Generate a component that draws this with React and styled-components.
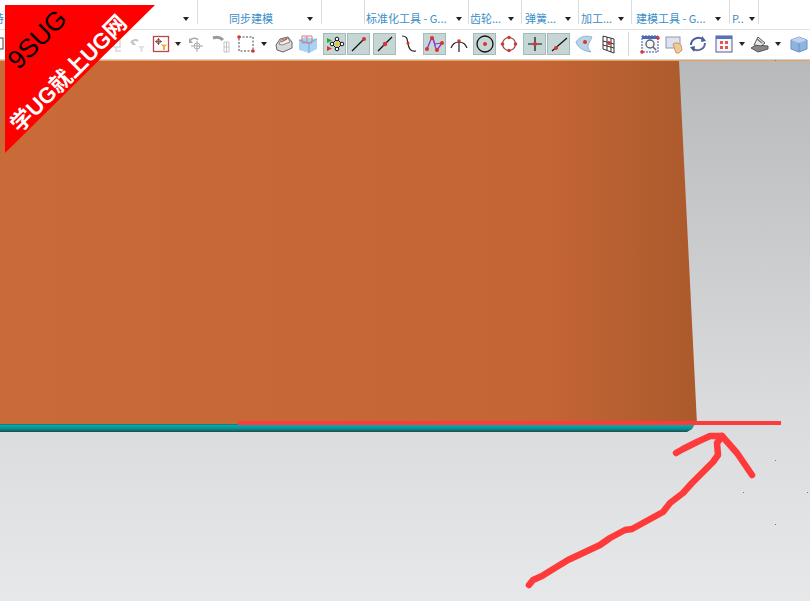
import React from 'react'
import styled, { createGlobalStyle } from 'styled-components'

const Global = createGlobalStyle`
    html, body {
        margin: 0;
        padding: 0;
        background: #fff;
        font-family: "Noto Sans CJK SC", "Liberation Sans", sans-serif;
    }
`

const Page = styled.div`
    position: relative;
    width: 810px;
    height: 601px;
    overflow: hidden;
    display: flex;
    flex-direction: column;
    background: #fff;
`

const Ribbon = styled.div`
    height: 30px;
    flex: none;
    box-sizing: border-box;
    display: flex;
    align-items: flex-start;
    background: #fff;
    border-bottom: 1px solid #e2e2e2;
`

const Group = styled.div`
    width: ${p => p.$w}px;
    height: 24px;
    flex: none;
    box-sizing: border-box;
    border-right: 1px solid #dcdcdc;
    display: flex;
    align-items: center;
    padding-top: 13px;
    padding-left: ${p => p.$pl || 0}px;
`

const Label = styled.span`
    font-size: 11px;
    line-height: 11px;
    color: #3b8ec7;
    white-space: nowrap;
    margin-left: ${p => p.$ml || 0}px;
`

const Caret = styled.i`
    display: block;
    flex: none;
    width: 0;
    height: 0;
    border-left: 3px solid transparent;
    border-right: 3px solid transparent;
    border-top: 4px solid #222;
    margin-left: ${p => p.$ml || 0}px;
    margin-right: ${p => p.$mr || 0}px;
`

const Toolbar = styled.div`
    height: 30px;
    flex: none;
    box-sizing: border-box;
    display: flex;
    align-items: center;
    padding-bottom: 2px;
    background: #fff;
    border-bottom: 1px solid #d4d4d4;
`

const Tool = styled.div`
    width: ${p => p.$w || 23}px;
    height: 22px;
    flex: none;
    box-sizing: border-box;
    margin-left: ${p => p.$ml || 0}px;
    display: flex;
    align-items: center;
    justify-content: center;
    background: ${p => (p.$on ? '#c6d6d4' : 'transparent')};
    border: ${p => (p.$on ? '1px solid #a3bcb9' : 'none')};
`

const Divider = styled.div`
    width: 1px;
    height: 24px;
    flex: none;
    background: #d8d8d8;
    margin-left: ${p => p.$ml || 0}px;
`

const Viewport = styled.div`
    flex: 1;
    position: relative;
    background: linear-gradient(#b8b9bb 0%, #d9dadc 62%, #e7e8ea 100%);
`

const Scene = styled.svg`
    display: block;
    width: 100%;
    height: 100%;
`

const Badge = styled.div`
    position: absolute;
    left: 5px;
    top: 5px;
    width: 150px;
    height: 148px;
    background: #fe0000;
    clip-path: polygon(0 0, 100% 0, 0 100%);
`

const BadgeTop = styled.span`
    position: absolute;
    left: -18px;
    top: 19px;
    width: 100px;
    text-align: center;
    font-family: "Liberation Sans", sans-serif;
    font-size: 26px;
    line-height: 30px;
    color: #000;
    transform: rotate(-45deg);
`

const BadgeBottom = styled.span`
    position: absolute;
    left: -21px;
    top: 54px;
    width: 170px;
    text-align: center;
    font-family: "Liberation Sans", "Noto Sans CJK SC", sans-serif;
    font-size: 22px;
    font-weight: 700;
    line-height: 30px;
    color: #fff;
    white-space: nowrap;
    transform: rotate(-45deg);
`

const Ico = ({ children }) => (
    <svg width="20" height="20" viewBox="0 0 20 20" fill="none">{children}</svg>
)

const Dot = ({ x, y, r = 1.8 }) => <circle cx={x} cy={y} r={r} fill="#d8352f" />

const icons = {
    start: (
        <svg width="8" height="14" viewBox="0 0 8 14" fill="none">
            <rect x="-3" y="1" width="6" height="11" stroke="#444" />
        </svg>
    ),
    ghostC: (
        <Ico>
            <path d="M8 5h6v8H8zM10 13v4h5" stroke="#d8d8d8" strokeWidth="1.5" />
        </Ico>
    ),
    ghostA: (
        <Ico>
            <path d="M3 9c1-3 5-4 7-2" stroke="#c4c4c4" strokeWidth="2" />
            <path d="M4 6v5h4" fill="#c4c4c4" />
            <path d="M10 12h7l-2.500 3v3h-2v-3z" fill="#e2e2e2" />
        </Ico>
    ),
    filter: (
        <Ico>
            <rect x="2.500" y="2.500" width="15" height="15" fill="#fff" stroke="#c0444c" strokeWidth="1.300" />
            <path d="M4 7.500h7M7.500 4v7" stroke="#8a5a5a" />
            <circle cx="7.500" cy="7.500" r="2" stroke="#8a4a4a" />
            <path d="M10 10.500h6l-2 2.500v3h-2v-3z" fill="#eeb23a" />
        </Ico>
    ),
    undoSnap: (
        <Ico>
            <path d="M4 7c1-3 6-4 8-1" stroke="#aaa" strokeWidth="1.500" />
            <path d="M3 4v5h4z" fill="#aaa" />
            <circle cx="11" cy="12" r="3" stroke="#aaa" />
            <path d="M5 12h12M11 7v11" stroke="#aaa" />
        </Ico>
    ),
    ghostB: (
        <Ico>
            <path d="M1 4c3-1 7-1 10 2" stroke="#9a9a9a" strokeWidth="3" />
            <path d="M12 8h5v10h-5zM12 13h5M14.500 8v10" stroke="#c4c4c4" />
        </Ico>
    ),
    marquee: (
        <Ico>
            <rect x="3" y="3" width="14" height="14" stroke="#444" strokeDasharray="2 1.500" />
            <Dot x={3} y={3} />
            <Dot x={17} y={17} />
        </Ico>
    ),
    solid: (
        <Ico>
            <path d="M2 11l4-6 8-2 4 5v6l-9 4-6-2z" fill="#d8d8d8" stroke="#666" />
            <path d="M5 10l2-4 7-2 2 4-8 3z" fill="#f4f4f4" stroke="#888" />
            <path d="M7 8l6-3" stroke="#d8453f" strokeWidth="1.200" />
        </Ico>
    ),
    box: (
        <Ico>
            <path d="M1 6l6-3 12 2v10l-8 4-10-3z" fill="#a9d3f2" />
            <path d="M1 6l10 3 8-4M11 9v10" stroke="#6aa6dc" />
            <path d="M4 2h10v7H4zM9 2v7" stroke="#e2767a" />
        </Ico>
    ),
    nodes: (
        <Ico>
            <path d="M2 4l5 2.500-5 2.500z" fill="#27a82f" />
            <path d="M2 12l5 2.500-5 2.500z" fill="#d8352f" />
            <path d="M12 5l5 5-5 5-5-5z" stroke="#111" />
            <circle cx="12" cy="5" r="1.800" stroke="#111" fill="#fff" />
            <circle cx="12" cy="15" r="1.800" stroke="#111" fill="#fff" />
            <circle cx="7" cy="10" r="1.800" stroke="#111" fill="#fff" />
            <circle cx="17" cy="10" r="1.800" stroke="#111" fill="#fff" />
            <circle cx="12" cy="10" r="2" fill="#f2c21a" />
        </Ico>
    ),
    lineEnd: (
        <Ico>
            <path d="M3 17L15 5" stroke="#111" strokeWidth="1.200" />
            <circle cx="15" cy="5" r="2" fill="#d8352f" />
        </Ico>
    ),
    lineMid: (
        <Ico>
            <path d="M3 17L17 3" stroke="#111" strokeWidth="1.200" />
            <circle cx="10" cy="10" r="2.200" fill="#d8352f" />
        </Ico>
    ),
    curve: (
        <Ico>
            <path d="M3 2c6 0 5 4 6 8s2 8 8 7" stroke="#222" strokeWidth="1.200" />
            <circle cx="9" cy="9" r="1.600" fill="#d8352f" />
        </Ico>
    ),
    spline: (
        <Ico>
            <path d="M2 15L7 3c2 0 3 13 5 13l5-7" stroke="#8a36c9" strokeWidth="1.300" />
            <path d="M7 4l3 6 7-1" stroke="#8a36c9" strokeWidth="1" />
            <Dot x={2} y={15} r={2} />
            <Dot x={7} y={4} r={2} />
            <Dot x={12} y={16} r={2} />
            <Dot x={17} y={9} r={2} />
        </Ico>
    ),
    arc: (
        <Ico>
            <path d="M2 14c3-8 13-8 16 0M10 7v11" stroke="#222" strokeWidth="1.200" />
            <circle cx="10" cy="7" r="1.800" fill="#d8352f" />
        </Ico>
    ),
    circleCenter: (
        <Ico>
            <circle cx="10" cy="10" r="8" stroke="#111" strokeWidth="1.300" />
            <circle cx="10" cy="10" r="2" fill="#d8352f" />
        </Ico>
    ),
    circlePts: (
        <Ico>
            <circle cx="10" cy="10" r="6.500" stroke="#8a4a4a" strokeWidth="1.200" />
            <Dot x={10} y={3.500} />
            <Dot x={10} y={16.500} />
            <Dot x={3.500} y={10} />
            <Dot x={16.500} y={10} />
        </Ico>
    ),
    cross: (
        <Ico>
            <path d="M3 10h14M10 3v14" stroke="#111" strokeWidth="1.200" />
            <circle cx="10" cy="10" r="2" fill="#d8352f" />
        </Ico>
    ),
    lineLow: (
        <Ico>
            <path d="M3 17L18 4" stroke="#111" strokeWidth="1.200" />
            <circle cx="7" cy="14" r="2" fill="#d8352f" />
        </Ico>
    ),
    surface: (
        <Ico>
            <path d="M1 8c3-5 9-7 16-5l-3 6c-2 3-1 6 2 9-7-1-13-4-15-10z" fill="#b9d4e8" stroke="#8fb2cf" />
            <circle cx="10" cy="8" r="2" fill="#d8352f" />
        </Ico>
    ),
    grid: (
        <Ico>
            <path d="M4 2l11 3v14L4 15zM8 3v13M12 4v14M4 7l11 3M4 11l11 3" stroke="#333" />
            <circle cx="10" cy="9" r="2" fill="#d8352f" />
        </Ico>
    ),
    zoomFit: (
        <Ico>
            <rect x="2" y="2" width="16" height="16" fill="#f4f7fc" stroke="#3a55a0" strokeDasharray="2 1" />
            <rect x="2" y="2" width="16" height="3" fill="#4a6ab0" />
            <circle cx="10" cy="10" r="4" stroke="#666" strokeWidth="1.400" />
            <path d="M13 13l3 3" stroke="#666" strokeWidth="1.600" />
            <Dot x={18} y={4} />
            <Dot x={2} y={18} />
        </Ico>
    ),
    pan: (
        <Ico>
            <rect x="2" y="3" width="14" height="11" fill="#dfe3ee" stroke="#8d97b5" />
            <path d="M9 10c2-2 6-1 8 1l1 5-3 3h-3z" fill="#f0c99a" stroke="#c79a65" />
        </Ico>
    ),
    rotate: (
        <Ico>
            <path d="M3 11C3 5 11 1 16 6" stroke="#4a5f9d" strokeWidth="2" />
            <path d="M17 9c0 6-8 10-13 5" stroke="#5a6f9d" strokeWidth="2" />
            <path d="M14 2l4 5-5 1zM6 18l-4-5 5-1z" fill="#4a5f9d" />
        </Ico>
    ),
    views: (
        <Ico>
            <rect x="2" y="2" width="16" height="16" fill="#f5f6fb" stroke="#4a5f9d" />
            <rect x="2" y="2" width="16" height="3" fill="#5a72b5" />
            <path d="M6 7h3v3H6zM11 7h3v3h-3zM6 12h3v3H6zM11 12h3v3h-3z" fill="#e0564c" />
        </Ico>
    ),
    render: (
        <Ico>
            <path d="M1 14l5-3 12 1v3l-10 3z" fill="#888" stroke="#555" />
            <path d="M4 11l4-8 7 6-4 3z" fill="#e8e8e8" stroke="#555" />
            <path d="M7 5l5 4" stroke="#777" strokeWidth="1.500" />
        </Ico>
    ),
    cube: (
        <Ico>
            <path d="M2 6l8-3 8 3v9l-8 3-8-3z" fill="#8eb3e0" stroke="#6a8fc4" />
            <path d="M2 6l8 3 8-3-8-3z" fill="#bcd2ef" />
            <path d="M10 9v9" stroke="#6a8fc4" />
        </Ico>
    ),
}

const ribbonGroups = [
    { w: 198, label: '持', ml: -7, caret: 179 },
    { w: 124, label: '同步建模', pl: 31, caret: 34 },
    { w: 43 },
    { w: 104, label: '标准化工具 - G...', pl: 1, caret: 9 },
    { w: 53, label: '齿轮...', pl: 1, caret: 7 },
    { w: 57, label: '弹簧...', pl: 3, caret: 9 },
    { w: 53, label: '加工...', pl: 2, caret: 6 },
    { w: 98, label: '建模工具 - G...', pl: 4, caret: 9 },
    { w: 29, label: 'P..', pl: 2, caret: 5 },
]

const tools = [
    { id: 'start', w: 8 },
    { id: 'ghostC', w: 20, ml: 98 },
    { id: 'ghostA' },
    { id: 'filter' },
    { caret: true },
    { id: 'undoSnap' },
    { id: 'ghostB', ml: 3 },
    { id: 'marquee', ml: 1 },
    { caret: true, ml: 1 },
    { id: 'solid', ml: 2 },
    { id: 'box', ml: 1 },
    { id: 'nodes', on: true, ml: 4 },
    { id: 'lineEnd', on: true, ml: 1 },
    { id: 'lineMid', on: true, ml: 3 },
    { id: 'curve', ml: 1 },
    { id: 'spline', on: true, ml: 3 },
    { id: 'arc', ml: 1 },
    { id: 'circleCenter', on: true, ml: 3 },
    { id: 'circlePts', ml: 1 },
    { id: 'cross', on: true, ml: 3 },
    { id: 'lineLow', on: true, ml: 1 },
    { id: 'surface', ml: 3 },
    { id: 'grid', ml: 1 },
    { divider: true, ml: 8 },
    { id: 'zoomFit', ml: 9 },
    { id: 'pan', ml: 1 },
    { id: 'rotate', ml: 1 },
    { id: 'views', ml: 3 },
    { caret: true, ml: 1 },
    { id: 'render' },
    { caret: true, ml: 1 },
    { id: 'cube', ml: 3 },
]

const App = () => (
    <Page>
        <Global />
        <Ribbon>
            {ribbonGroups.map((g, i) => (
                <Group key={i} $w={g.w} $pl={g.pl}>
                    {g.label && <Label $ml={g.ml}>{g.label}</Label>}
                    {g.caret !== undefined && <Caret $ml={g.caret} />}
                </Group>
            ))}
        </Ribbon>
        <Toolbar>
            {tools.map((t, i) => {
                if (t.divider) return <Divider key={i} $ml={t.ml} />
                if (t.caret) return <Caret key={i} $ml={(t.ml || 0) + 3} $mr={3} />
                return (
                    <Tool key={i} $on={t.on} $ml={t.ml} $w={t.w}>
                        {icons[t.id]}
                    </Tool>
                )
            })}
        </Toolbar>
        <Viewport>
            <Scene viewBox="0 0 810 541">
                <defs>
                    <linearGradient id="body" x1="0" x2="1" y1="0" y2="0">
                        <stop offset="0" stopColor="#c96a39" />
                        <stop offset="0.78" stopColor="#c46535" />
                        <stop offset="1" stopColor="#ab5a2c" />
                    </linearGradient>
                    <linearGradient id="rim" x1="0" x2="0" y1="0" y2="1">
                        <stop offset="0" stopColor="#2c5a50" />
                        <stop offset="0.15" stopColor="#00adad" />
                        <stop offset="0.6" stopColor="#0b8f90" />
                        <stop offset="1" stopColor="#1f4a4c" />
                    </linearGradient>
                </defs>
                <rect x="0" y="0" width="810" height="1" fill="#e8a15e" />
                <path d="M0 1H679L697 364H0Z" fill="url(#body)" />
                <path d="M0 364H695L692 369L687 372H0Z" fill="url(#rim)" />
                <path d="M238 363H781" stroke="#ff3a3a" strokeWidth="4" />
                <path
                    d="M529 525L533 520L542 516L550 511L568 500L600 485L610 478L625 470L632 469L663 452L670 443L683 433L692 423L702 413L713 402L718 395L717 383L722 376"
                    stroke="#ff3a3a"
                    strokeWidth="6.500"
                    fill="none"
                    strokeLinecap="round"
                    strokeLinejoin="round"
                />
                <path
                    d="M676 393L683 389L697 382L710 376L722 376L737 393L752 415"
                    stroke="#ff3a3a"
                    strokeWidth="6.500"
                    fill="none"
                    strokeLinecap="round"
                    strokeLinejoin="round"
                />
                <g fill="#777">
                    <rect x="775" y="0" width="1" height="1" />
                    <rect x="775" y="400" width="1" height="1" />
                    <rect x="743" y="432" width="1" height="1" />
                    <rect x="807" y="432" width="1" height="1" />
                    <rect x="775" y="464" width="1" height="1" />
                </g>
            </Scene>
        </Viewport>
        <Badge>
            <BadgeTop>9SUG</BadgeTop>
            <BadgeBottom>学UG就上UG网</BadgeBottom>
        </Badge>
    </Page>
)

export default App
